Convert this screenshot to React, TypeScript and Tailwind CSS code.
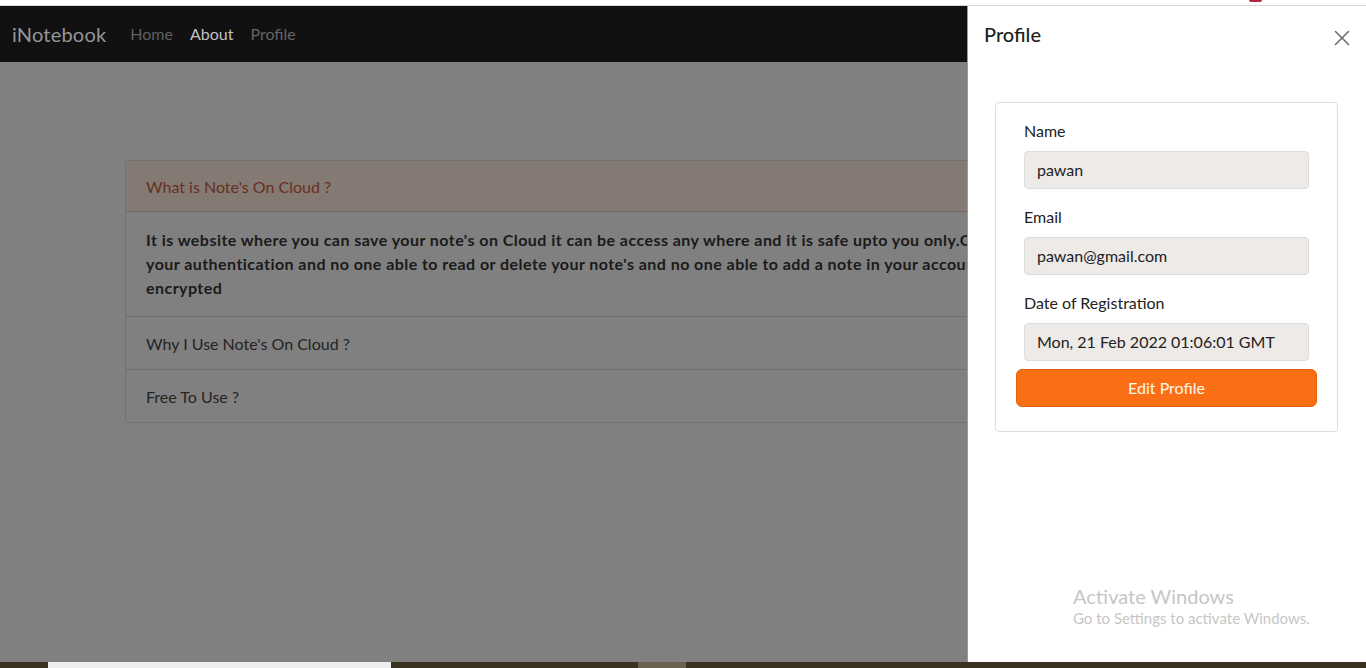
import { X } from "lucide-react";

const faq = [
  { q: "Why I Use Note's On Cloud ?" },
  { q: "Free To Use ?" },
];

const fields = [
  { label: "Name", value: "pawan", gap: "mb-4" },
  { label: "Email", value: "pawan@gmail.com", gap: "mb-4" },
  { label: "Date of Registration", value: "Mon, 21 Feb 2022 01:06:01 GMT", gap: "mb-2" },
];

export default function App() {
  return (
    <div className="relative flex h-[668px] w-[1366px] flex-col overflow-hidden bg-[#808080] font-['Lato','Open_Sans',sans-serif]">
      {/* browser strip */}
      <div className="relative h-[6px] shrink-0 border-b border-[#d6d6d6] bg-white">
        <div className="absolute left-[1249px] top-0 h-[2px] w-[13px] rounded-b-full bg-[#b0283a]" />
      </div>

      {/* dimmed page */}
      <div className="flex flex-1 flex-col">
        <nav className="flex h-[56px] shrink-0 items-center bg-[#121111] px-3">
          <span className="text-[20px] tracking-[0.2px] text-[#969696]">iNotebook</span>
          <div className="ml-[24px] flex gap-[17px] text-[16px]">
            <a className="text-[#5f5f5f]">Home</a>
            <a className="text-[#c0c0c0]">About</a>
            <a className="text-[#646464]">Profile</a>
          </div>
        </nav>

        <div className="flex-1 pt-[98px]">
          <div className="ml-[125px] w-[1116px] rounded border border-[#717171]">
            <div className="flex h-[51px] items-center border-b border-[#6d6866] bg-[#857974] px-5 pt-[2px] text-[16px] text-[#66301f]">
              What is Note's On Cloud ?
            </div>
            <div className="px-5 py-4 text-[16px] font-bold leading-6 tracking-[0.45px] text-[#1a1a1a]">
              <span className="block whitespace-nowrap">
                It is website where you can save your note's on Cloud it can be access any where and it is safe upto you only.Only
              </span>
              <span className="block whitespace-nowrap">
                your authentication and no one able to read or delete your note's and no one able to add a note in your account.
              </span>
              <span className="block">encrypted</span>
            </div>
            {faq.map((f) => (
              <div
                key={f.q}
                className="flex h-[53px] items-center border-t border-[#6f6f6f] px-5 pt-[2px] text-[16px] text-[#242424]"
              >
                {f.q}
              </div>
            ))}
          </div>
        </div>
      </div>

      {/* taskbar strip */}
      <div className="relative h-[6px] shrink-0 bg-[#3a3121]">
        <div className="absolute left-[48px] top-0 h-full w-[343px] bg-[#eeeeee]" />
        <div className="absolute left-[638px] top-0 h-full w-[48px] bg-[#6a6150]" />
      </div>

      {/* offcanvas */}
      <aside className="absolute bottom-[6px] right-0 top-[6px] flex w-[399px] flex-col border-l border-[#9a9a9a] bg-white">
        <div className="flex h-[56px] items-center justify-between px-4">
          <h5 className="text-[20px] font-medium text-[#1e1e1e]">Profile</h5>
          <X className="mr-[-5px] mt-[8px] h-[26px] w-[26px] text-[#6b6b6b]" strokeWidth={1.4} />
        </div>
        <div className="px-4 pt-4">
          <div className="ml-[11px] mt-6 w-[343px] rounded border border-[#dedede] px-5 pb-6 pt-4">
            {fields.map((f) => (
              <div key={f.label} className={`mx-2 ${f.gap}`}>
                <label className="mb-2 block text-[16px] leading-6 text-[#222]">{f.label}</label>
                <div className="flex h-[38px] items-center rounded border border-[#dcdcdc] bg-[#eeeae7] px-3 text-[16px] text-[#222]">
                  {f.value}
                </div>
              </div>
            ))}
            <button className="h-[38px] w-full rounded-md border border-[#e2640f] bg-[#fa6f15] text-[16px] text-[#fff8ee]">
              Edit Profile
            </button>
          </div>
        </div>
        <div className="mt-auto mb-[34px] ml-[105px] text-[#c6c6c6]">
          <div className="text-[20px] leading-6">Activate Windows</div>
          <div className="text-[15px] leading-5">Go to Settings to activate Windows.</div>
        </div>
      </aside>
    </div>
  );
}
